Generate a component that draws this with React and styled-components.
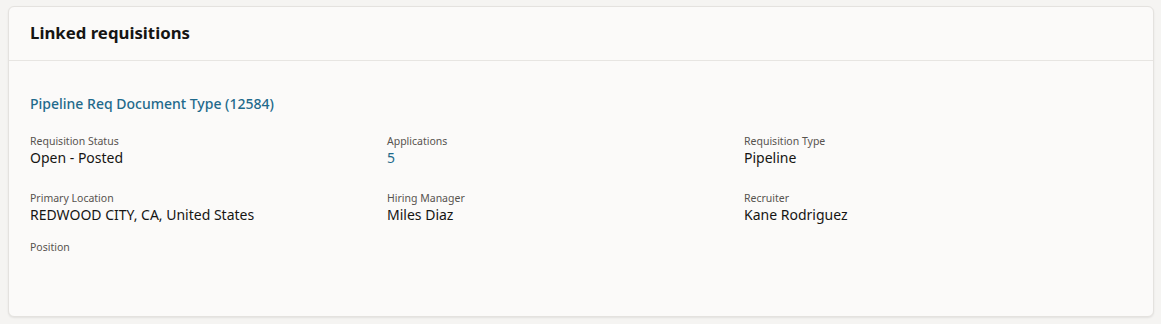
import React from "react"
import styled, { createGlobalStyle } from 'styled-components'

const GlobalStyle = createGlobalStyle`
    body {
        margin: 0;
        background: #f5f4f2;
        font-family: "Noto Sans", "Open Sans", sans-serif;
        color: #161513;
    }
`

const fields = [
    { label: 'Requisition Status', value: 'Open - Posted' },
    { label: 'Applications', value: '5', link: true },
    { label: 'Requisition Type', value: 'Pipeline' },
    { label: 'Primary Location', value: 'REDWOOD CITY, CA, United States' },
    { label: 'Hiring Manager', value: 'Miles Diaz' },
    { label: 'Recruiter', value: 'Kane Rodriguez' },
    { label: 'Position', value: '', tight: true },
]

export default function App() {
    return <Page>
        <GlobalStyle />
        <Card>
            <Header>
                <Title>Linked requisitions</Title>
            </Header>
            <Body>
                <ReqLink href="#">Pipeline Req Document Type (12584)</ReqLink>
                <Fields>
                    {fields.map(f => (
                        <Field key={f.label} tight={f.tight}>
                            <Label>{f.label}</Label>
                            {f.value && <Value link={f.link}>{f.value}</Value>}
                        </Field>
                    ))}
                </Fields>
            </Body>
        </Card>
    </Page>
}

const Page = styled.div`
    padding: 6px 7px 7px 8px;
`

const Card = styled.div`
    background: #fbfaf9;
    border: 1px solid #e4e2df;
    border-radius: 6px;
    box-shadow: 0 1px 2px rgba(0, 0, 0, 0.08);
    height: 311px;
    box-sizing: border-box;
`

const Header = styled.div`
    height: 54px;
    box-sizing: border-box;
    padding: 0 21px;
    display: flex;
    align-items: center;
    border-bottom: 1px solid #e7e5e2;
`

const Title = styled.h2`
    margin: 0;
    font-size: 16.8px;
    font-weight: 700;
    color: #161513;
    padding-bottom: 2px;
`

const Body = styled.div`
    padding: 34px 21px 0 21px;
`

const ReqLink = styled.a`
    display: block;
    font-size: 14px;
    font-weight: 500;
    color: #1f6a8c;
    text-decoration: none;
    line-height: 18px;
`

const Fields = styled.div`
    margin-top: 21px;
    display: grid;
    grid-template-columns: 357px 357px 1fr;
    row-gap: 24px;
`

const Field = styled.div`
    display: flex;
    flex-direction: column;
    margin-top: ${props => (props.tight ? '-8px' : '0')};
`

const Label = styled.span`
    font-size: 10.5px;
    color: #57534f;
    line-height: 15px;
`

const Value = styled.span`
    font-size: 14px;
    line-height: 18px;
    color: ${props => (props.link ? '#1f6a8c' : '#161513')};
`
